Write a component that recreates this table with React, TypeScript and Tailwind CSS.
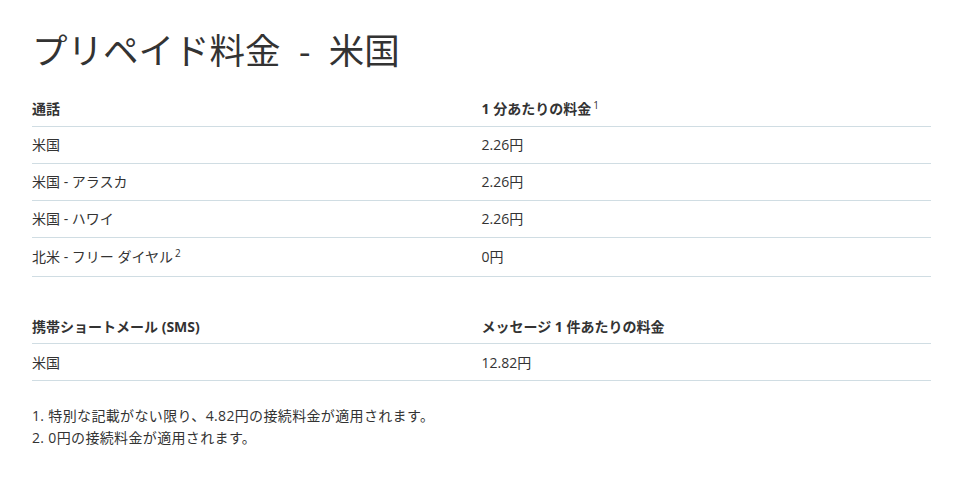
const font = { fontFamily: '"Open Sans", "Noto Sans CJK JP", sans-serif' };

type Row = { name: React.ReactNode; price: string; tall?: boolean };

const callRows: Row[] = [
  { name: "米国", price: "2.26円" },
  { name: "米国 - アラスカ", price: "2.26円" },
  { name: "米国 - ハワイ", price: "2.26円" },
  {
    name: (
      <>
        北米 - フリー ダイヤル<sup className="ml-[2px] text-[10px]">2</sup>
      </>
    ),
    price: "0円",
    tall: true,
  },
];

const smsRows: Row[] = [{ name: "米国", price: "12.82円" }];

function RateTable({ head, sub, rows }: { head: React.ReactNode; sub: React.ReactNode; rows: Row[] }) {
  return (
    <table className="w-full border-collapse text-[14px] text-[#333]">
      <thead>
        <tr className="border-b border-[#d0dde3]">
          <th className="w-1/2 h-[38px] pt-[4px] text-left font-bold">{head}</th>
          <th className="h-[38px] pt-[4px] text-left font-bold">{sub}</th>
        </tr>
      </thead>
      <tbody>
        {rows.map((r, i) => (
          <tr key={i} className="border-b border-[#d0dde3]">
            <td className={r.tall ? "h-[39px]" : "h-[37px]"}>{r.name}</td>
            <td className={r.tall ? "h-[39px]" : "h-[37px]"}>{r.price}</td>
          </tr>
        ))}
      </tbody>
    </table>
  );
}

export default function App() {
  return (
    <div className="bg-white min-h-[494px] px-[32px] pt-[24px] pr-[30px] text-[#333]" style={font}>
      <h1 className="text-[35.5px] leading-[52px] font-normal text-[#333] mb-[12px]">プリペイド料金&nbsp; - &nbsp;米国</h1>
      <RateTable
        head="通話"
        sub={
          <>
            1 分あたりの料金<sup className="ml-[2px] text-[10px] font-normal">1</sup>
          </>
        }
        rows={callRows}
      />
      <div className="h-[29px]" />
      <RateTable head="携帯ショートメール (SMS)" sub="メッセージ 1 件あたりの料金" rows={smsRows} />
      <ol className="mt-[24px] text-[14px] leading-[22px] tracking-[0.35px]">
        <li>1. 特別な記載がない限り、4.82円の接続料金が適用されます。</li>
        <li>2. 0円の接続料金が適用されます。</li>
      </ol>
    </div>
  );
}
